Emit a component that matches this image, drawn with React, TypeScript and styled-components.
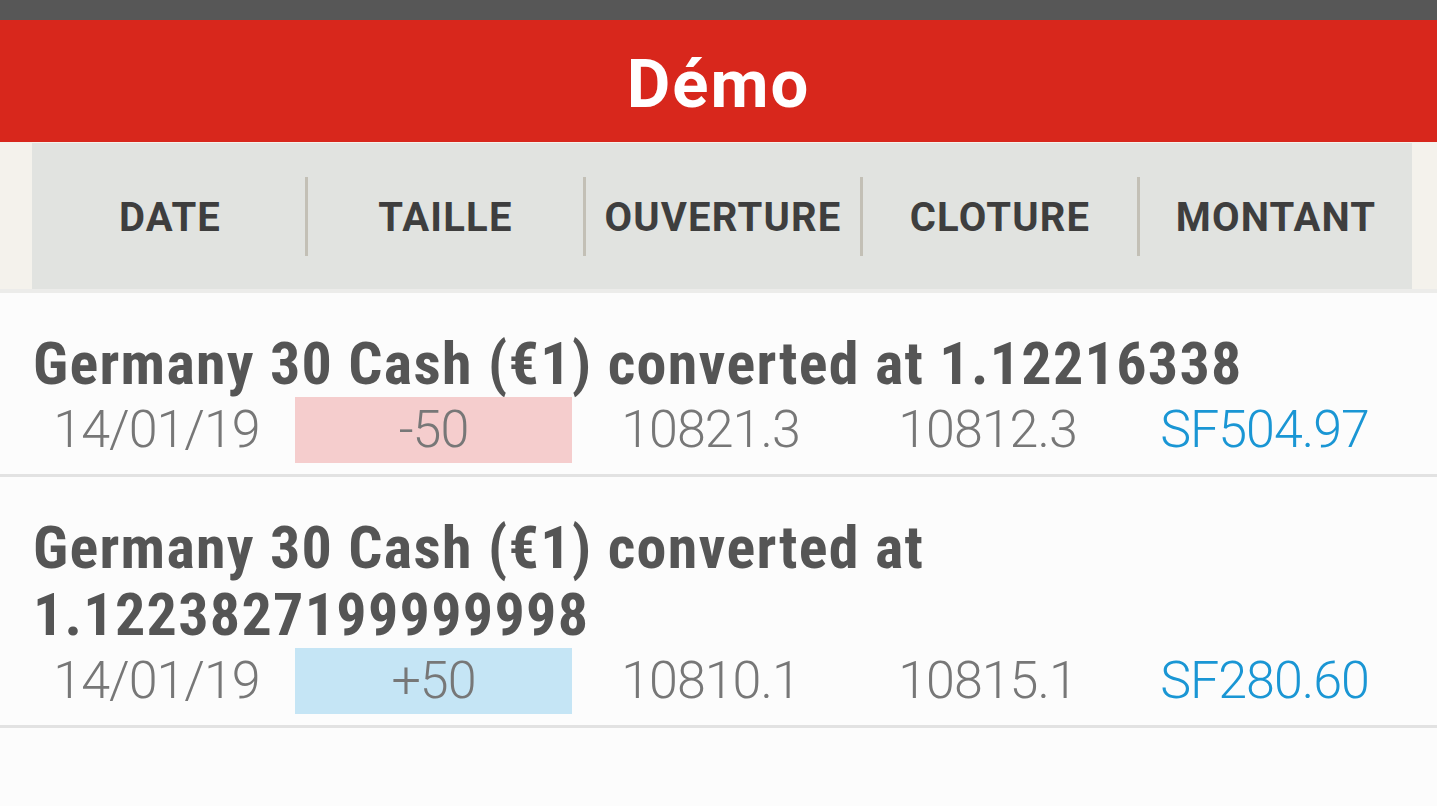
import styled, { createGlobalStyle } from 'styled-components'

const GlobalStyle = createGlobalStyle`
  html, body {
    margin: 0;
    padding: 0;
    background: #fcfcfc;
    font-family: 'Roboto Condensed', Roboto, 'Liberation Sans', sans-serif;
  }
`

const Screen = styled.div`
  width: 1437px;
  height: 806px;
  overflow: hidden;
  background: #fcfcfc;
`

const StatusBar = styled.div`
  height: 20px;
  background: #575757;
`

const TitleBar = styled.header`
  height: 122px;
  background: #d8271c;
  display: flex;
  align-items: center;
  justify-content: center;
`

const Title = styled.h1`
  margin: 6px 0 0;
  color: #fff;
  font-family: Roboto, sans-serif;
  font-weight: 700;
  font-size: 67px;
  line-height: 1;
  letter-spacing: 2px;
`

const HeaderStrip = styled.div`
  background: #f4f2ec;
  padding: 1px 25px 0 32px;
  border-bottom: 4px solid #ececea;
`

const HeaderRow = styled.div`
  height: 146px;
  background: #e1e3e0;
  display: grid;
  grid-template-columns: 273px 278px 277px 277px 1fr;
  align-items: center;
`

const HeaderCell = styled.div<{ divided?: boolean }>`
  height: 77px;
  display: flex;
  align-items: center;
  justify-content: center;
  border-left: 3px solid ${p => (p.divided ? '#c3c0b6' : 'transparent')};
  color: #3e3e3e;
  font-family: Roboto, sans-serif;
  font-weight: 700;
  font-size: 40px;
  letter-spacing: 1.2px;
  padding-top: 2px;
`

const Trade = styled.div`
  padding: 37px 0 11px;
  border-bottom: 3px solid #e2e2e2;
`

const TradeName = styled.div`
  padding: 0 40px 0 33px;
  color: #555;
  font-weight: 700;
  font-size: 60px;
  line-height: 67px;
  letter-spacing: 1.3px;
`

const Figures = styled.div`
  display: grid;
  grid-template-columns: repeat(5, 277px);
  padding-left: 18px;
`

const Figure = styled.div<{ tone?: 'sell' | 'buy' | 'amount' }>`
  height: 66px;
  line-height: 66px;
  text-align: center;
  font-family: Roboto, sans-serif;
  font-weight: 300;
  font-size: 52px;
  letter-spacing: -1px;
  color: ${p => (p.tone === 'amount' ? '#1a96d4' : '#777')};
  background: ${p =>
    p.tone === 'sell' ? '#f5cdcd' : p.tone === 'buy' ? '#c5e5f5' : 'transparent'};
`

interface TradeData {
  name: string
  date: string
  size: string
  open: string
  close: string
  amount: string
}

const trades: TradeData[] = [
  {
    name: 'Germany 30 Cash (€1) converted at 1.12216338',
    date: '14/01/19',
    size: '-50',
    open: '10821.3',
    close: '10812.3',
    amount: 'SF504.97',
  },
  {
    name: 'Germany 30 Cash (€1) converted at 1.1223827199999998',
    date: '14/01/19',
    size: '+50',
    open: '10810.1',
    close: '10815.1',
    amount: 'SF280.60',
  },
]

const columns = ['DATE', 'TAILLE', 'OUVERTURE', 'CLOTURE', 'MONTANT']

function App() {
  return (
    <Screen>
      <GlobalStyle />
      <StatusBar />
      <TitleBar>
        <Title>Démo</Title>
      </TitleBar>
      <HeaderStrip>
        <HeaderRow>
          {columns.map((c, i) => (
            <HeaderCell key={c} divided={i > 0}>
              {c}
            </HeaderCell>
          ))}
        </HeaderRow>
      </HeaderStrip>
      {trades.map((t, i) => (
        <Trade key={i}>
          <TradeName>{t.name}</TradeName>
          <Figures>
            <Figure>{t.date}</Figure>
            <Figure tone={t.size.startsWith('-') ? 'sell' : 'buy'}>{t.size}</Figure>
            <Figure>{t.open}</Figure>
            <Figure>{t.close}</Figure>
            <Figure tone="amount">{t.amount}</Figure>
          </Figures>
        </Trade>
      ))}
    </Screen>
  )
}

export default App
